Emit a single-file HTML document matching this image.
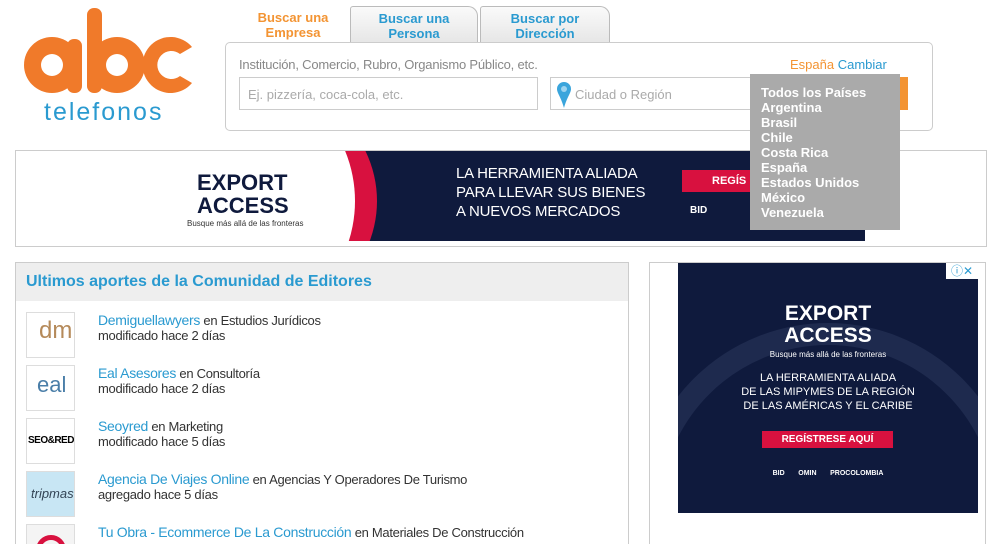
<!DOCTYPE html>
<html style="height:544px;overflow:hidden"><head><meta charset="utf-8"><style>
*{margin:0;padding:0;box-sizing:border-box}
body{width:988px;height:544px;overflow:hidden;background:#fff;font-family:"Liberation Sans",Arial,sans-serif;position:relative}
.abs{position:absolute}
.tab{position:absolute;top:6px;height:37px;text-align:center;font-size:13px;font-weight:bold;line-height:15px;padding-top:4px}
.tab.g{background:linear-gradient(#fafafa,#e6e6e6);border:1px solid #bbb;border-bottom:none;border-radius:3px 10px 0 0;color:#2a9ad0}
.box{position:absolute;left:225px;top:42px;width:708px;height:89px;border:1px solid #ccc;border-radius:5px;background:#fff}
.inp{position:absolute;border:1px solid #ccc;height:33px;font-size:13px;color:#aaa;padding:9px 8px}
.dd{position:absolute;left:750px;top:74px;width:150px;height:156px;background:#aaa;color:#fff;font-size:13px;font-weight:bold;line-height:15px;padding:11px 11px}
.item{position:absolute;left:26px;height:48px}
.thumb{position:absolute;left:0;top:0;width:49px;height:46px;border:1px solid #ddd;background:#fff;overflow:hidden}
.it{position:absolute;left:72px;top:1px;font-size:13px;color:#333;line-height:15px;white-space:nowrap;letter-spacing:-.3px}
.it a{color:#2a9ad0;font-size:14px;text-decoration:none}
</style></head><body>
<div class="abs" style="left:20px;top:5px;width:175px;height:120px">
<svg width="175" height="95" viewBox="0 0 175 95">
<g fill="#f07a2a">
<circle cx="32" cy="60" r="28"/><rect x="47" y="34" width="15" height="54" rx="7"/>
<rect x="67" y="3" width="15" height="85" rx="7"/><circle cx="97" cy="60" r="28"/>
<path d="M172 42a28 28 0 1 0 0 36l-12-7a14 14 0 1 1 0-22z"/>
</g>
<g fill="#fff"><circle cx="32" cy="60" r="11"/><circle cx="97" cy="60" r="11"/></g>
</svg>
<div style="position:absolute;left:24px;top:95px;font-size:25px;color:#2a9ad0;letter-spacing:2px;line-height:24px">telefonos</div>
</div>
<div class="tab" style="left:238px;width:110px;color:#f39433;background:#fff">Buscar una<br>Empresa</div>
<div class="tab g" style="left:350px;width:128px">Buscar una<br>Persona</div>
<div class="tab g" style="left:480px;width:130px">Buscar por<br>Dirección</div>
<div class="box">
<div class="abs" style="left:13px;top:14px;font-size:13px;color:#888;letter-spacing:-.2px">Institución, Comercio, Rubro, Organismo Público, etc.</div>
<div class="abs" style="left:564px;top:14px;font-size:13px;color:#f39433">España <span style="color:#2a9ad0">Cambiar</span></div>
<div class="inp" style="left:13px;top:34px;width:299px">Ej. pizzería, coca-cola, etc.</div>
<div class="inp" style="left:324px;top:34px;width:210px;padding-left:24px">Ciudad o Región
<svg class="abs" style="left:6px;top:4px" width="14" height="26" viewBox="0 0 14 26"><path d="M7 0a7 7 0 0 1 7 7c0 4-4 8-7 19C4 15 0 11 0 7a7 7 0 0 1 7-7z" fill="#3aa5dc"/><circle cx="7" cy="7" r="3" fill="#9dd4f0"/></svg></div>
<div class="abs" style="left:670px;top:34px;width:12px;height:33px;background:#f39433"></div>
</div>
<div class="abs" style="left:15px;top:150px;width:972px;height:97px;border:1px solid #ccc"></div>
<div class="abs" style="left:137px;top:151px;width:728px;height:90px;background:#0f1a3d;overflow:hidden">
<div class="abs" style="left:-60px;top:-80px;width:300px;height:260px;border-radius:50%;background:#fff;border-right:22px solid #d8113f"></div>
<div class="abs" style="left:60px;top:20px;color:#0f1a3d;font-weight:bold;font-size:22px;line-height:23px">EXPORT<br>ACCESS</div>
<div class="abs" style="left:50px;top:68px;font-size:8px;color:#333">Busque más allá de las fronteras</div>
<div class="abs" style="left:319px;top:13px;color:#fff;font-size:15px;line-height:19px;letter-spacing:-.2px">LA HERRAMIENTA ALIADA<br>PARA LLEVAR SUS BIENES<br>A NUEVOS MERCADOS</div>
<div class="abs" style="left:545px;top:19px;width:80px;height:22px;background:#d8113f;color:#fff;font-weight:bold;font-size:11px;padding:5px 0 0 30px">REGÍS</div>
<div class="abs" style="left:553px;top:54px;color:#fff;font-weight:bold;font-size:10px">BID</div>
</div>
<div class="dd">Todos los Países<br>Argentina<br>Brasil<br>Chile<br>Costa Rica<br>España<br>Estados Unidos<br>México<br>Venezuela</div>
<div class="abs" style="left:15px;top:262px;width:614px;height:282px;border:1px solid #ccc;border-bottom:none"></div>
<div class="abs" style="left:16px;top:263px;width:612px;height:38px;background:#eee"></div>
<div class="abs" style="left:26px;top:273px;font-size:16px;font-weight:bold;color:#2a9ad0">Ultimos aportes de la Comunidad de Editores</div>
<div class="item" style="top:312px"><div class="thumb"><div style="font-size:24px;color:#b58a5a;margin:4px 0 0 12px">dml</div></div><div class="it"><a>Demiguellawyers</a> en Estudios Jurídicos<br>modificado hace 2 días</div></div>
<div class="item" style="top:365px"><div class="thumb"><div style="font-size:22px;color:#4a7ea8;margin:6px 0 0 10px">eal</div></div><div class="it"><a>Eal Asesores</a> en Consultoría<br>modificado hace 2 días</div></div>
<div class="item" style="top:418px"><div class="thumb"><div style="font-size:10px;font-weight:bold;margin:16px 0 0 1px;letter-spacing:-.5px">SEO&amp;RED</div></div><div class="it"><a>Seoyred</a> en Marketing<br>modificado hace 5 días</div></div>
<div class="item" style="top:471px"><div class="thumb" style="background:#c8e6f4"><div style="font-size:13px;font-style:italic;color:#345;margin:14px 0 0 4px">tripmastic</div></div><div class="it"><a>Agencia De Viajes Online</a> en Agencias Y Operadores De Turismo<br>agregado hace 5 días</div></div>
<div class="thumb abs" style="left:26px;top:524px;height:20px;background:#f4f4f4;border-bottom:none"><div style="width:30px;height:30px;border:5px solid #d8113f;border-radius:50%;margin:10px 0 0 9px"></div></div>
<div class="it abs" style="left:98px;top:525px"><a>Tu Obra - Ecommerce De La Construcción</a> en Materiales De Construcción</div>
<div class="abs" style="left:649px;top:262px;width:337px;height:282px;border:1px solid #ccc;border-bottom:none"></div>
<div class="abs" style="left:678px;top:263px;width:300px;height:250px;background:#0f1a3d;overflow:hidden;text-align:center;color:#fff">
<div class="abs" style="left:-40px;top:60px;width:380px;height:380px;border-radius:50%;border:22px solid #1e2a4e"></div>
<div class="abs" style="left:0;top:40px;width:300px;font-weight:bold;font-size:21px;line-height:22px">EXPORT<br>ACCESS</div>
<div class="abs" style="left:0;top:87px;width:300px;font-size:8px">Busque más allá de las fronteras</div>
<div class="abs" style="left:0;top:108px;width:300px;font-size:11px;line-height:14px">LA HERRAMIENTA ALIADA<br>DE LAS MIPYMES DE LA REGIÓN<br>DE LAS AMÉRICAS Y EL CARIBE</div>
<div class="abs" style="left:84px;top:168px;width:131px;height:17px;background:#d8113f;font-size:10px;font-weight:bold;line-height:17px">REGÍSTRESE AQUÍ</div>
<div class="abs" style="left:0;top:207px;width:300px;font-size:7px;font-weight:bold">BID &nbsp;&nbsp;&nbsp;&nbsp;&nbsp; OMIN &nbsp;&nbsp;&nbsp;&nbsp;&nbsp; PROCOLOMBIA</div>
<div class="abs" style="left:268px;top:0;width:32px;height:16px;background:#fff;color:#2a9ad0;font-size:12px;line-height:16px">ⓘ✕</div>
</div>
</body></html>
